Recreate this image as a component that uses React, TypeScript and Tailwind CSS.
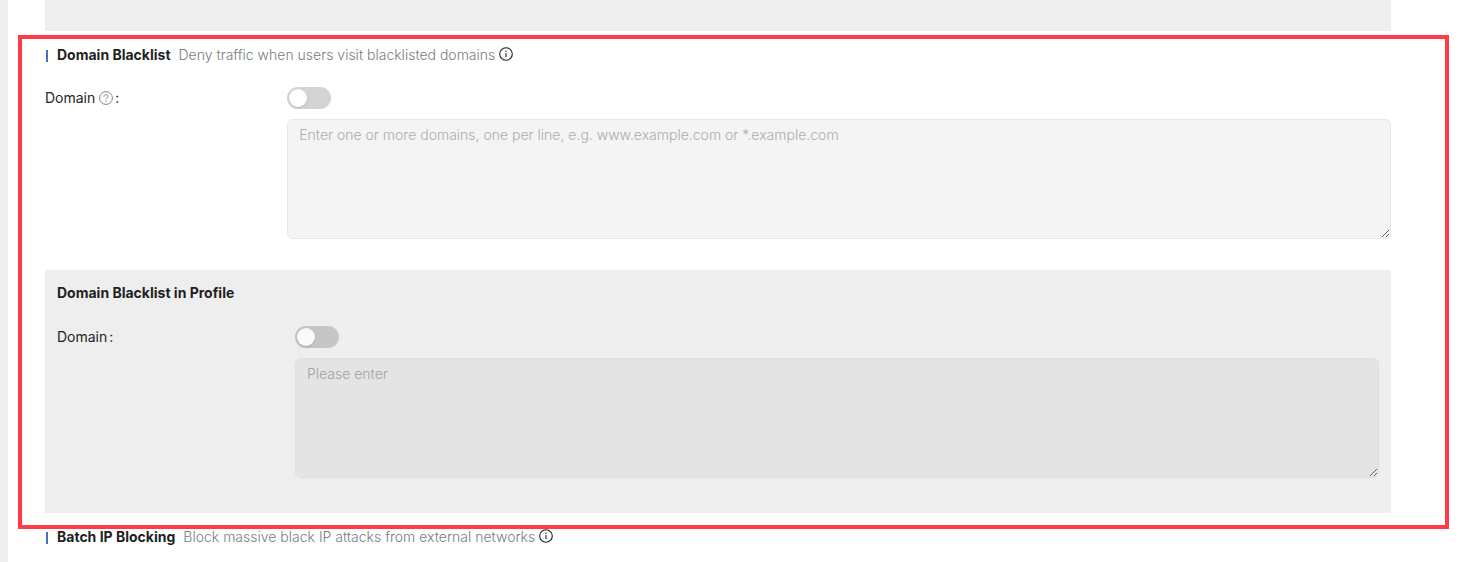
import React, { useState } from "react";

const InfoIcon = () => (
  <svg viewBox="0 0 14 14" className="h-[14px] w-[14px] shrink-0" fill="none" aria-hidden="true">
    <circle cx="7" cy="7" r="6.3" stroke="#1f1f1f" strokeWidth="1.1" />
    <path d="M7 6.1v4.1" stroke="#1f1f1f" strokeWidth="1.1" />
    <circle cx="7" cy="4.2" r="0.7" fill="#1f1f1f" />
  </svg>
);

const QuestionIcon = () => (
  <svg viewBox="0 0 14 14" className="h-[14px] w-[14px] shrink-0" fill="none" aria-hidden="true">
    <circle cx="7" cy="7" r="6.4" stroke="#858585" strokeWidth="1" />
    <path
      d="M4.9 5.6c0-1.1.9-1.9 2.1-1.9s2.1.7 2.1 1.8c0 1.3-2.1 1.4-2.1 2.9"
      stroke="#858585"
      strokeWidth="1"
    />
    <circle cx="7" cy="10" r="0.65" fill="#858585" />
  </svg>
);

type HeadingProps = {
  title: string;
  description: string;
};

const SectionHeading = ({ title, description }: HeadingProps) => (
  <div className="flex items-center">
    <span className="mt-[2px] mr-[9px] ml-px h-3 w-[2px] bg-[#4a6cd0]" />
    <h2 className="font-bold text-[#1f1f1f]">{title}</h2>
    <span className="ml-2 text-[#7c7c7c]">{description}</span>
    <span className="mb-[2px] ml-1">
      <InfoIcon />
    </span>
  </div>
);

type FieldProps = {
  id: string;
  placeholder: string;
  help?: boolean;
  muted?: boolean;
};

const DomainField = ({ id, placeholder, help, muted }: FieldProps) => {
  const [enabled, setEnabled] = useState(false);

  return (
    <div className="flex items-start">
      <label
        id={`${id}-label`}
        htmlFor={id}
        className="flex w-[18%] shrink-0 items-center font-normal text-[#1f1f1f]"
      >
        <span>Domain</span>
        {help && (
          <span className="ml-1">
            <QuestionIcon />
          </span>
        )}
        <span className="ml-[2px]">:</span>
      </label>
      <div className="flex min-w-0 flex-1 flex-col items-start gap-[10px]">
        <button
          type="button"
          role="switch"
          aria-checked={enabled}
          aria-labelledby={`${id}-label`}
          onClick={() => setEnabled(!enabled)}
          className={`flex h-[22px] w-11 items-center rounded-full p-[2px] transition-colors ${
            enabled ? "justify-end bg-blue-500" : muted ? "bg-[#c6c6c6]" : "bg-[#d4d4d4]"
          }`}
        >
          <span
            className={`h-[18px] w-[18px] rounded-full shadow-sm ${
              muted ? "bg-[#fafafa]" : "bg-white"
            }`}
          />
        </button>
        <textarea
          id={id}
          placeholder={placeholder}
          readOnly={!enabled}
          className={`block h-[120px] w-full resize-y rounded-md border px-[11px] py-1 outline-none ${
            muted
              ? "border-[#e0e0e0] bg-[#e4e4e4] placeholder:text-[#a0a0a0]"
              : "border-[#e6e6e6] bg-[#f4f4f4] placeholder:text-[#acacac]"
          }`}
        />
      </div>
    </div>
  );
};

const App = () => {
  return (
    <div className="flex min-h-screen bg-white font-['Inter',sans-serif] text-[14px] leading-[22px] font-light">
      <div className="w-2 shrink-0 bg-[#eeeeee]" />
      <main className="min-w-0 flex-1 pr-[79px] pl-[37px]">
        <div className="h-[31px] bg-[#eeeeee]" />

        <section className="relative pt-[13px]">
          <SectionHeading
            title="Domain Blacklist"
            description="Deny traffic when users visit blacklisted domains"
          />
          <div className="mt-[21px]">
            <DomainField
              id="domain"
              placeholder="Enter one or more domains, one per line, e.g. www.example.com or *.example.com"
              help
            />
          </div>

          <div className="mt-[31px] bg-[#eeeeee] px-3 pt-3 pb-[35px]">
            <h3 className="mb-[22px] font-bold text-[#1f1f1f]">Domain Blacklist in Profile</h3>
            <DomainField id="profile-domain" placeholder="Please enter" muted />
          </div>

          {/* highlight frame */}
          <div className="pointer-events-none absolute top-1 -right-[58px] -bottom-4 -left-[27px] border-4 border-[#ff3b47]" />
        </section>

        <section className="pt-[13px]">
          <SectionHeading
            title="Batch IP Blocking"
            description="Block massive black IP attacks from external networks"
          />
        </section>
      </main>
    </div>
  );
};

export default App;
